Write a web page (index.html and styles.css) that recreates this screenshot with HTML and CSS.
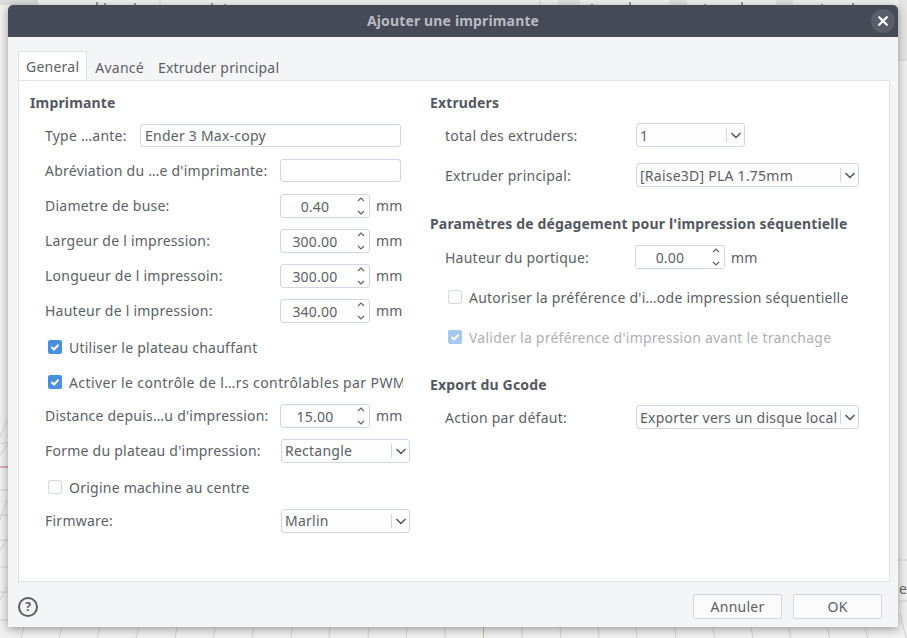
FILE: index.html
```html
<!DOCTYPE html>
<html lang="fr">
<head>
<meta charset="utf-8">
<title>Ajouter une imprimante</title>
<link rel="stylesheet" href="styles.css">
</head>
<body>
<div class="backdrop">
  <svg class="grid" width="907" height="638" viewBox="0 0 907 638">
    <rect x="0" y="0" width="38" height="5" fill="#dcdcdc"/>
    <rect x="558" y="0" width="22" height="5" fill="#e2e2e2"/>
    <rect x="669" y="0" width="18" height="5" fill="#e2e2e2"/>
    <rect x="776" y="0" width="17" height="5" fill="#e2e2e2"/>
    <rect x="898" y="0" width="9" height="60" fill="#e6e6e6"/>
    <g stroke="#d2d2d2" stroke-width="1" fill="none">
      <path d="M0 443H8M0 490H8M0 515H8M0 540H8M0 567H8M0 592H8M0 620H8"/>
      <path d="M0 437L7 420M0 455L7 445M0 520L7 500M0 550L7 540M0 600L7 587"/>
      <path d="M24 627L21 638M62 627L59 638M100 627L97 638M139 627L136 638M177 627L175 638M215 627L213 638M254 627L252 638M292 627L291 638M330 627L329 638M369 627L368 638M407 627L406 638M445 627L445 638M522 627L522 638M560 627L561 638M598 627L599 638M636 627L637 638M675 627L676 638M713 627L715 638M751 627L753 638M789 627L791 638M827 627L830 638M865 627L868 638M900 613L906 638"/>
      <path d="M160 0V5M540 0V5M898 60H907M898 560H907M898 601H907"/>
    </g>
    <path d="M97 2V5M105 3V5M135 3V5M212 3V5M225 4V5M592 4V5M630 2V5M705 4V5M742 2V5M822 4V5M853 3V5" stroke="#999" stroke-width="2"/>
    <path d="M0 467H8" stroke="#d9666f" stroke-width="1"/>
    <path d="M483.5 627V638" stroke="#a6d48a" stroke-width="1"/>
  </svg>
  <span class="behind">e</span>
  <div class="dialog">
    <header class="titlebar">
      <span class="title">Ajouter une imprimante</span>
      <span class="close">
        <svg width="10" height="10" viewBox="0 0 10 10"><path d="M1.2 1.2L8.8 8.8M8.8 1.2L1.2 8.8" stroke="#fff" stroke-width="2.2" stroke-linecap="round"/></svg>
      </span>
    </header>
    <div class="body">
      <nav class="tabs">
        <span class="tab active">General</span>
        <span class="tab">Avancé</span>
        <span class="tab">Extruder principal</span>
      </nav>
      <main class="panel">
        <section class="col col-left">
          <h2 class="heading">Imprimante</h2>
          <div class="row"><span class="lbl lbl-type">Type …ante:</span><span class="input input-type">Ender 3 Max-copy</span></div>
          <div class="row"><span class="lbl">Abréviation du …e d'imprimante:</span><span class="input input-abbr"></span></div>
          <div class="row"><span class="lbl">Diametre de buse:</span><span class="spin"><span class="val">0.40</span><span class="arrows"><svg width="10" height="24" viewBox="0 0 10 24"><path d="M2 7L5 4L8 7M2 17L5 20L8 17" fill="none" stroke="#5c5f66" stroke-width="1.1"/></svg></span></span><span class="unit">mm</span></div>
          <div class="row"><span class="lbl">Largeur de l impression:</span><span class="spin"><span class="val">300.00</span><span class="arrows"><svg width="10" height="24" viewBox="0 0 10 24"><path d="M2 7L5 4L8 7M2 17L5 20L8 17" fill="none" stroke="#5c5f66" stroke-width="1.1"/></svg></span></span><span class="unit">mm</span></div>
          <div class="row"><span class="lbl">Longueur de l impressoin:</span><span class="spin"><span class="val">300.00</span><span class="arrows"><svg width="10" height="24" viewBox="0 0 10 24"><path d="M2 7L5 4L8 7M2 17L5 20L8 17" fill="none" stroke="#5c5f66" stroke-width="1.1"/></svg></span></span><span class="unit">mm</span></div>
          <div class="row"><span class="lbl">Hauteur de l impression:</span><span class="spin"><span class="val">340.00</span><span class="arrows"><svg width="10" height="24" viewBox="0 0 10 24"><path d="M2 7L5 4L8 7M2 17L5 20L8 17" fill="none" stroke="#5c5f66" stroke-width="1.1"/></svg></span></span><span class="unit">mm</span></div>
          <div class="row check-row"><span class="check on"><svg width="14" height="14" viewBox="0 0 14 14"><path d="M3.5 7L6 9.5L10.5 4.8" fill="none" stroke="#fff" stroke-width="2"/></svg></span><span class="check-text">Utiliser le plateau chauffant</span></div>
          <div class="row check-row"><span class="check on"><svg width="14" height="14" viewBox="0 0 14 14"><path d="M3.5 7L6 9.5L10.5 4.8" fill="none" stroke="#fff" stroke-width="2"/></svg></span><span class="check-text stretch">Activer le contrôle de l…rs contrôlables par PWM)</span></div>
          <div class="row"><span class="lbl">Distance depuis…u d'impression:</span><span class="spin"><span class="val">15.00</span><span class="arrows"><svg width="10" height="24" viewBox="0 0 10 24"><path d="M2 7L5 4L8 7M2 17L5 20L8 17" fill="none" stroke="#5c5f66" stroke-width="1.1"/></svg></span></span><span class="unit">mm</span></div>
          <div class="row"><span class="lbl lbl-combo">Forme du plateau d'impression:</span><span class="combo combo-wide"><span class="combo-text">Rectangle</span><span class="caret"><svg width="12" height="12" viewBox="0 0 12 12"><path d="M1.5 4L6 8.5L10.5 4" fill="none" stroke="#4d5058" stroke-width="1.4"/></svg></span></span></div>
          <div class="row check-row"><span class="check"></span><span class="check-text">Origine machine au centre</span></div>
          <div class="row"><span class="lbl lbl-combo">Firmware:</span><span class="combo combo-wide"><span class="combo-text">Marlin</span><span class="caret"><svg width="12" height="12" viewBox="0 0 12 12"><path d="M1.5 4L6 8.5L10.5 4" fill="none" stroke="#4d5058" stroke-width="1.4"/></svg></span></span></div>
        </section>
        <section class="col col-right">
          <h2 class="heading">Extruders</h2>
          <div class="row row-r first-r"><span class="lbl lbl-r">total des extruders:</span><span class="combo combo-small"><span class="combo-text">1</span><span class="caret"><svg width="12" height="12" viewBox="0 0 12 12"><path d="M1.5 4L6 8.5L10.5 4" fill="none" stroke="#4d5058" stroke-width="1.4"/></svg></span></span></div>
          <div class="row row-r"><span class="lbl lbl-r">Extruder principal:</span><span class="combo combo-large"><span class="combo-text">[Raise3D] PLA 1.75mm</span><span class="caret"><svg width="12" height="12" viewBox="0 0 12 12"><path d="M1.5 4L6 8.5L10.5 4" fill="none" stroke="#4d5058" stroke-width="1.4"/></svg></span></span></div>
          <h2 class="heading heading-seq">Paramètres de dégagement pour l'impression séquentielle</h2>
          <div class="row row-r gantry"><span class="lbl lbl-gantry">Hauteur du portique:</span><span class="spin"><span class="val">0.00</span><span class="arrows"><svg width="10" height="24" viewBox="0 0 10 24"><path d="M2 7L5 4L8 7M2 17L5 20L8 17" fill="none" stroke="#5c5f66" stroke-width="1.1"/></svg></span></span><span class="unit">mm</span></div>
          <div class="row row-r check-row check-r"><span class="check"></span><span class="check-text">Autoriser la préférence d'i…ode impression séquentielle</span></div>
          <div class="row row-r check-row check-r disabled"><span class="check on"><svg width="14" height="14" viewBox="0 0 14 14"><path d="M3.5 7L6 9.5L10.5 4.8" fill="none" stroke="#fff" stroke-width="2"/></svg></span><span class="check-text">Valider la préférence d'impression avant le tranchage</span></div>
          <h2 class="heading heading-export">Export du Gcode</h2>
          <div class="row row-r first-r"><span class="lbl lbl-r">Action par défaut:</span><span class="combo combo-large"><span class="combo-text">Exporter vers un disque local</span><span class="caret"><svg width="12" height="12" viewBox="0 0 12 12"><path d="M1.5 4L6 8.5L10.5 4" fill="none" stroke="#4d5058" stroke-width="1.4"/></svg></span></span></div>
        </section>
      </main>
      <footer class="footer">
        <span class="help">?</span>
        <span class="btns"><span class="btn">Annuler</span><span class="btn">OK</span></span>
      </footer>
    </div>
  </div>
</div>
</body>
</html>
```
FILE: styles.css
```css
html, body { margin: 0; padding: 0; }
body { width: 907px; height: 638px; overflow: hidden; font-family: "Noto Sans", "Open Sans", sans-serif; font-size: 14px; letter-spacing: .24px; color: #5c5f66; }
.backdrop { position: relative; width: 907px; height: 638px; background: #f1f1f1; overflow: hidden; }
.grid { position: absolute; left: 0; top: 0; }
.behind { position: absolute; left: 899px; top: 579px; color: #666; }
.dialog { position: absolute; left: 8px; top: 5px; width: 890px; height: 622px; background: #f4f5f7; border-radius: 5px 5px 0 0; box-shadow: 0 2px 10px rgba(0,0,0,.38); display: flex; flex-direction: column; overflow: hidden; }
.titlebar { height: 32px; box-sizing: border-box; padding-bottom: 2px; flex: none; background: #464a57; display: flex; align-items: center; justify-content: center; position: relative; }
.title { color: #b9bbc1; font-weight: 700; font-size: 14px; letter-spacing: .15px; }
.close { position: absolute; right: 3px; top: 4px; width: 24px; height: 24px; border-radius: 50%; background: #5a5e6a; display: flex; align-items: center; justify-content: center; }
.body { flex: 1; display: flex; flex-direction: column; padding: 14px 8px 0 10px; min-height: 0; }
.tabs { display: flex; height: 29px; flex: none; position: relative; z-index: 1; }
.tab { padding: 3px 7px 0 8px; line-height: 28px; box-sizing: border-box; height: 29px; }
.tab.active { background: #fff; border: 1px solid #dde2ea; border-bottom: none; padding: 1px 7px 0; line-height: 27px; }
.tab:last-child { letter-spacing: .2px; padding-left: 8px; margin-left: -1px; }
.panel { height: 502px; flex: none; box-sizing: border-box; background: #fff; border: 1px solid #dde2ea; display: flex; }
.col { display: flex; flex-direction: column; }
.col-left { width: 400px; box-sizing: border-box; padding-left: 11px; flex: none; }
.col-right { padding-left: 11px; flex: 1; }
.heading { margin: 0; font-size: 14px; font-weight: 700; letter-spacing: .15px; line-height: 20px; height: 20px; padding-top: 12px; color: #55585f; flex: none; }
.row { display: flex; align-items: center; height: 35px; padding-left: 15px; white-space: nowrap; flex: none; }
.col-left .heading + .row { margin-top: 5px; }
.row-r { height: 40px; }
.first-r { margin-top: 2px; }
.gantry { margin-top: 3px; }
.lbl { width: 235px; flex: none; }
.lbl-type { width: 95px; }
.lbl-combo { width: 236px; }
.lbl-r { width: 191px; }
.lbl-gantry { width: 190px; }
.input { height: 23px; box-sizing: border-box; background: #fff; border: 1px solid #cfd7e6; border-radius: 3px; padding: 0 4px; line-height: 21px; display: block; }
.input-type { width: 261px; }
.input-abbr { width: 121px; }
.spin { width: 90px; height: 24px; box-sizing: border-box; border: 1px solid #cfd7e6; border-radius: 3px; display: flex; align-items: center; }
.val { flex: 1; text-align: center; padding-top: 1px; }
.arrows { width: 20px; height: 24px; flex: none; display: flex; align-items: center; justify-content: flex-end; padding-right: 3px; box-sizing: border-box; }
.unit { margin-left: 6px; }
.combo { height: 24px; box-sizing: border-box; border: 1px solid #cfd7e6; border-radius: 3px; display: flex; align-items: center; padding-left: 3px; background: #fdfdfe; }
.combo-text { flex: 1; min-width: 0; overflow: hidden; }
.caret { width: 18px; height: 14px; flex: none; border-left: 1px solid #cfd7e6; display: flex; align-items: center; justify-content: center; box-sizing: border-box; }
.combo-wide { width: 129px; }
.combo-small { width: 109px; }
.combo-large { width: 223px; }
.check-row { gap: 7px; padding-left: 18px; padding-top: 3px; box-sizing: border-box; }
.check { width: 14px; height: 14px; box-sizing: border-box; border: 1px solid #d3d8e2; border-radius: 2px; background: #fff; flex: none; display: block; }
.check.on { background: #4a90e2; border-color: #4a90e2; }
.check.on svg { display: block; margin: -1px; }
.check-r { padding-top: 0; }
.col-left .check-text { max-width: 334px; overflow: hidden; }
.col-left .stretch { letter-spacing: .4px; }
.heading-seq { padding-top: 19px; }
.heading-export { padding-top: 18px; }
.disabled .check-text { color: #aeb0b5; }
.disabled .check.on { background: #a5c8f0; border-color: #a5c8f0; }
.footer { flex: 1; display: flex; align-items: center; justify-content: space-between; padding-top: 4px; }
.help { width: 20px; height: 20px; box-sizing: border-box; border: 2px solid #5c5f66; border-radius: 50%; font-size: 12px; font-weight: 700; line-height: 16px; text-align: center; display: block; letter-spacing: 0; }
.btns { display: flex; gap: 11px; padding-right: 8px; }
.btn { width: 89px; height: 25px; box-sizing: border-box; border: 1px solid #cfd7e6; border-radius: 2px; background: #fbfbfc; text-align: center; line-height: 23px; }
```
